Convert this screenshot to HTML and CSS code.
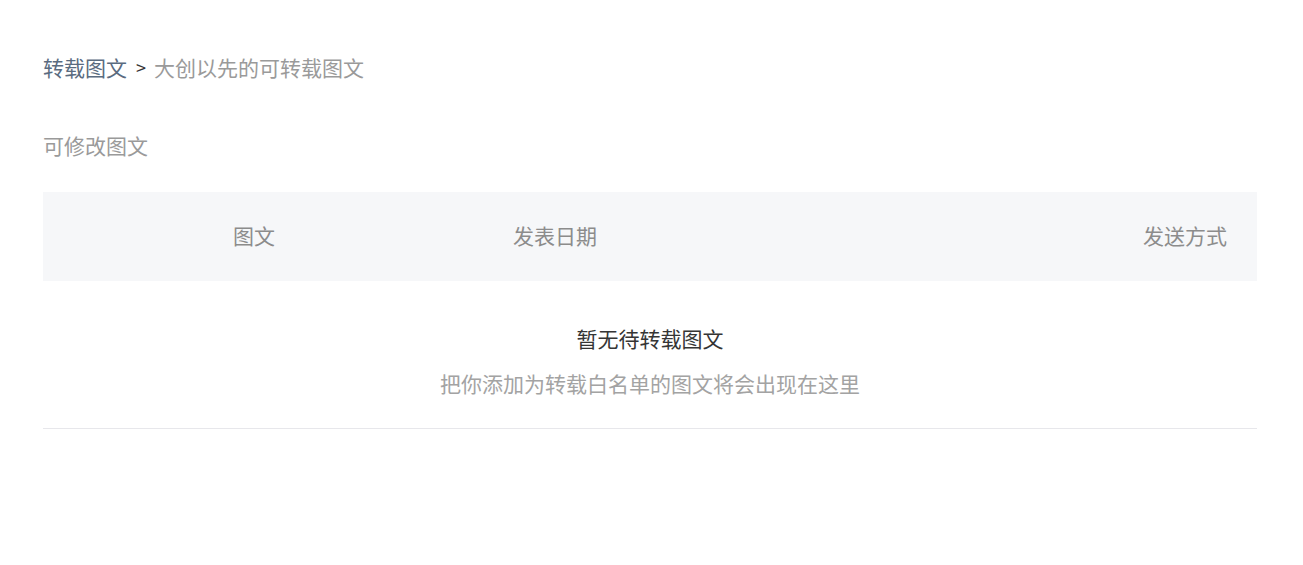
FILE: index.html
```html
<!DOCTYPE html>
<html lang="zh-CN">
<head>
    <meta charset="UTF-8">
    <meta name="viewport" content="width=device-width, initial-scale=1.0">
    <title>转载图文</title>
    <link rel="stylesheet" href="styles.css">
</head>
<body>
    <div class="page">
        <!-- 面包屑 -->
        <div class="crumbs">
            <a class="crumb-link" href="#">转载图文</a>
            <span class="crumb-sep">&gt;</span>
            <span class="crumb-current">大创以先的可转载图文</span>
        </div>

        <h2 class="section-title">可修改图文</h2>

        <div class="table">
            <div class="table-head">
                <div class="col col-article">图文</div>
                <div class="col col-date">发表日期</div>
                <div class="col col-mode">发送方式</div>
            </div>
            <div class="empty">
                <p class="empty-title">暂无待转载图文</p>
                <p class="empty-desc">把你添加为转载白名单的图文将会出现在这里</p>
            </div>
        </div>
    </div>
</body>
</html>
```

FILE: styles.css
```css
* {
    margin: 0;
    padding: 0;
    box-sizing: border-box;
}
body {
    font-family: "Microsoft YaHei", "Noto Sans CJK SC", "Noto Sans", sans-serif;
    font-size: 21px;
    background: #fff;
    color: #353535;
}
.page {
    padding: 52px 46px 0 43px;
}
.crumbs {
    display: flex;
    align-items: center;
    height: 30px;
    line-height: 30px;
}
.crumb-link {
    color: #5a6b80;
    text-decoration: none;
}
.crumb-sep {
    color: #353535;
    font-size: 18px;
    margin: 0 8px 0 9px;
}
.crumb-current {
    color: #9a9a9a;
}
.section-title {
    margin-top: 48px;
    font-size: 21px;
    font-weight: normal;
    line-height: 30px;
    color: #9a9a9a;
}
.table {
    margin-top: 32px;
    border-bottom: 1px solid #e7e7eb;
}
.table-head {
    display: grid;
    grid-template-columns: 422px 1fr 300px;
    align-items: center;
    height: 89px;
    padding-bottom: 4px;
    background: #f6f7f9;
    color: #8c8c8c;
}
.col-article {
    text-align: center;
}
.col-date {
    padding-left: 48px;
}
.col-mode {
    text-align: right;
    padding-right: 30px;
}
.empty {
    text-align: center;
    padding: 42px 0 30px;
}
.empty-title {
    line-height: 30px;
    color: #353535;
}
.empty-desc {
    margin-top: 15px;
    line-height: 30px;
    color: #a3a3a3;
}
```
